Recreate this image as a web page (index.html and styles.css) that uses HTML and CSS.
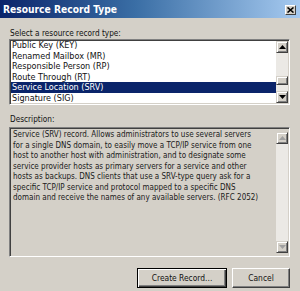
FILE: index.html
```html
<!DOCTYPE html>
<html>
<head>
<meta charset="utf-8">
<link rel="stylesheet" href="styles.css">
</head>
<body>
<div class="window">
  <div class="titlebar">
    <span class="title">Resource Record Type</span>
    <span class="close">
      <svg width="7" height="6" viewBox="0 0 7 6"><path d="M0.5 0.5 L6.5 5.5 M6.5 0.5 L0.5 5.5" stroke="#000" stroke-width="1.6"/></svg>
    </span>
  </div>
  <div class="content">
    <div class="label first">Select a resource record type:</div>
    <div class="listbox">
      <div class="items">
        <div class="item">Public Key (KEY)</div>
        <div class="item">Renamed Mailbox (MR)</div>
        <div class="item">Responsible Person (RP)</div>
        <div class="item">Route Through (RT)</div>
        <div class="item selected">Service Location (SRV)</div>
        <div class="item">Signature (SIG)</div>
      </div>
      <div class="scrollbar">
        <div class="sbtn"><svg width="7" height="4" viewBox="0 0 7 4"><path d="M3.5 0 L7 4 L0 4 Z" fill="#000"/></svg></div>
        <div class="track">
          <div class="thumb"></div>
        </div>
        <div class="sbtn"><svg width="7" height="4" viewBox="0 0 7 4"><path d="M0 0 L7 0 L3.5 4 Z" fill="#000"/></svg></div>
      </div>
    </div>
    <div class="label second">Description:</div>
    <div class="descbox">
      <div class="desctext">Service (SRV) record. Allows administrators to use several servers<br>for a single DNS domain, to easily move a TCP/IP service from one<br>host to another host with administration, and to designate some<br>service provider hosts as primary servers for a service and other<br>hosts as backups. DNS clients that use a SRV-type query ask for a<br>specific TCP/IP service and protocol mapped to a specific DNS<br>domain and receive the names of any available servers. (RFC 2052)</div>
      <div class="scrollbar disabled">
        <div class="sbtn"><svg width="7" height="4" viewBox="0 0 7 4"><path d="M3.5 0 L7 4 L0 4 Z" fill="#a0a0a0"/></svg></div>
        <div class="track"></div>
        <div class="sbtn"><svg width="7" height="4" viewBox="0 0 7 4"><path d="M0 0 L7 0 L3.5 4 Z" fill="#a0a0a0"/></svg></div>
      </div>
    </div>
    <div class="buttons">
      <div class="button default">Create Record...</div>
      <div class="button cancel">Cancel</div>
    </div>
  </div>
</div>
</body>
</html>
```
FILE: styles.css
```css
html, body {
  margin: 0;
  padding: 0;
}
body {
  width: 300px;
  height: 291px;
  overflow: hidden;
  background: #d4d0c8;
  font-family: "DejaVu Sans Condensed", "DejaVu Sans", sans-serif;
  font-size: 8px;
  color: #111;
}
.window {
  width: 300px;
  height: 291px;
  background: #d4d0c8;
  display: flex;
  flex-direction: column;
}
.titlebar {
  height: 18px;
  display: flex;
  align-items: center;
  justify-content: space-between;
  padding: 0 4px 0 3px;
  background: linear-gradient(to right, #0a246a 0%, #3a6ea5 45%, #a6caf0 100%);
  box-sizing: border-box;
}
.title {
  color: #fff;
  font-weight: bold;
  font-size: 10.2px;
}
.close {
  width: 11px;
  height: 10px;
  background: #d4d0c8;
  border-top: 1px solid #fff;
  border-left: 1px solid #fff;
  border-right: 1px solid #404040;
  border-bottom: 1px solid #404040;
  display: flex;
  align-items: center;
  justify-content: center;
  box-sizing: border-box;
  margin-top: 2px;
}
.content {
  padding: 0 10px 0 9px;
  display: flex;
  flex-direction: column;
}
.label {
  line-height: 12px;
  height: 12px;
  font-size: 8.2px;
  padding-left: 1px;
}
.label.first {
  margin-top: 9px;
}
.label.second {
  margin-top: 8px;
}
.listbox {
  margin-top: 0;
  height: 66px;
  background: #fff;
  border-top: 1px solid #808080;
  border-left: 1px solid #808080;
  border-right: 1px solid #fff;
  border-bottom: 1px solid #fff;
  box-shadow: inset 1px 1px 0 #404040, inset -1px -1px 0 #d4d0c8;
  box-sizing: border-box;
  display: flex;
  padding: 0 1px 0 1px;
}
.items {
  flex: 1;
  min-width: 0;
  overflow: hidden;
}
.item {
  height: 10.5px;
  line-height: 10.5px;
  padding-left: 1px;
  white-space: nowrap;
  font-size: 9px;
}
.item.selected {
  background: #0a246a;
  color: #fff;
}
.scrollbar {
  width: 12px;
  flex: none;
  display: flex;
  flex-direction: column;
}
.listbox .scrollbar {
  margin: 1px 0;
}
.sbtn {
  width: 12px;
  height: 12px;
  background: #d4d0c8;
  border-top: 1px solid #d4d0c8;
  border-left: 1px solid #d4d0c8;
  border-right: 1px solid #404040;
  border-bottom: 1px solid #404040;
  box-shadow: inset 1px 1px 0 #fff, inset -1px -1px 0 #808080;
  box-sizing: border-box;
  display: flex;
  align-items: center;
  justify-content: center;
}
.track {
  flex: 1;
  background: #ebe9e5;
  position: relative;
}
.thumb {
  position: absolute;
  left: 0;
  right: 0;
  top: 23px;
  height: 9px;
  background: #d4d0c8;
  border-top: 1px solid #d4d0c8;
  border-left: 1px solid #d4d0c8;
  border-right: 1px solid #404040;
  border-bottom: 1px solid #404040;
  box-shadow: inset 1px 1px 0 #fff, inset -1px -1px 0 #808080;
  box-sizing: border-box;
}
.descbox {
  margin-top: 2px;
  height: 130px;
  background: #d4d0c8;
  border-top: 1px solid #808080;
  border-left: 1px solid #808080;
  border-right: 1px solid #fff;
  border-bottom: 1px solid #fff;
  box-shadow: inset 1px 1px 0 #404040, inset -1px -1px 0 #d4d0c8;
  box-sizing: border-box;
  display: flex;
  padding: 2px 1px 2px 1px;
}
.desctext {
  flex: 1;
  min-width: 0;
  overflow: hidden;
  white-space: nowrap;
  line-height: 10.5px;
  padding-left: 2px;
  font-size: 8px;
  color: #1a1a1a;
}
.descbox .scrollbar {
  margin: 2px 0 1px 0;
}
.buttons {
  margin-top: 11px;
  display: flex;
  justify-content: flex-end;
  gap: 5px;
}
.button {
  height: 20px;
  line-height: 18px;
  text-align: center;
  background: #d4d0c8;
  border-top: 1px solid #fff;
  border-left: 1px solid #fff;
  border-right: 1px solid #404040;
  border-bottom: 1px solid #404040;
  box-shadow: inset -1px -1px 0 #808080;
  box-sizing: border-box;
  font-size: 8.4px;
}
.button.default {
  width: 90px;
  border: 1px solid #000;
  box-shadow: inset 1px 1px 0 #fff, inset -1px -1px 0 #404040, inset -2px -2px 0 #808080;
}
.button.cancel {
  width: 58px;
}
```
